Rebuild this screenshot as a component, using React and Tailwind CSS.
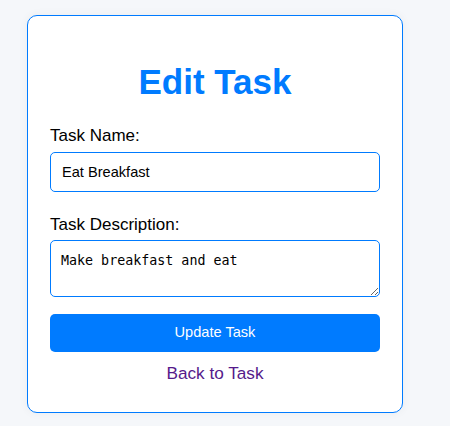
import React from "react";

export default function App() {
  return (
    <div
      className="min-h-[426px] w-full bg-[#f5f7fa] pt-[15px] pl-[27px]"
      style={{ fontFamily: '"Liberation Sans", Arial, sans-serif' }}
    >
      <div className="w-[376px] box-border rounded-[10px] border border-[#007bff] bg-white px-[22px] pt-[22px] pb-[29px] shadow-[0_0_10px_rgba(0,0,0,0.05)]">
        <h2 className="mt-[24px] text-center text-[35px] font-bold leading-[40px] text-[#007bff]">
          Edit Task
        </h2>
        <label className="mt-[24px] block text-[17px] leading-[20px] text-black">
          Task Name:
        </label>
        <input
          type="text"
          defaultValue="Eat Breakfast"
          className="mt-[6px] box-border block h-[40px] w-full rounded-[5px] border border-[#007bff] bg-white pl-[11px] pr-[10px] text-[14.6px] text-black outline-none"
          style={{ fontFamily: '"Liberation Sans", Arial, sans-serif' }}
        />
        <label className="mt-[23px] block text-[17px] leading-[20px] text-black">
          Task Description:
        </label>
        <textarea
          defaultValue="Make breakfast and eat"
          className="mt-[5px] box-border block h-[57px] w-full rounded-[5px] border border-[#007bff] bg-white p-[10px] text-[13.33px] leading-normal text-black outline-none"
          style={{ fontFamily: '"DejaVu Sans Mono", monospace' }}
        />
        <button
          type="button"
          className="mt-[17px] block h-[38px] w-full rounded-[5px] bg-[#007bff] text-center text-[14.6px] text-white"
        >
          Update Task
        </button>
        <div className="mt-[11px] text-center text-[17.2px] leading-[20px]">
          <a href="#" className="text-[#551a8b] no-underline">
            Back to Task
          </a>
        </div>
      </div>
    </div>
  );
}
